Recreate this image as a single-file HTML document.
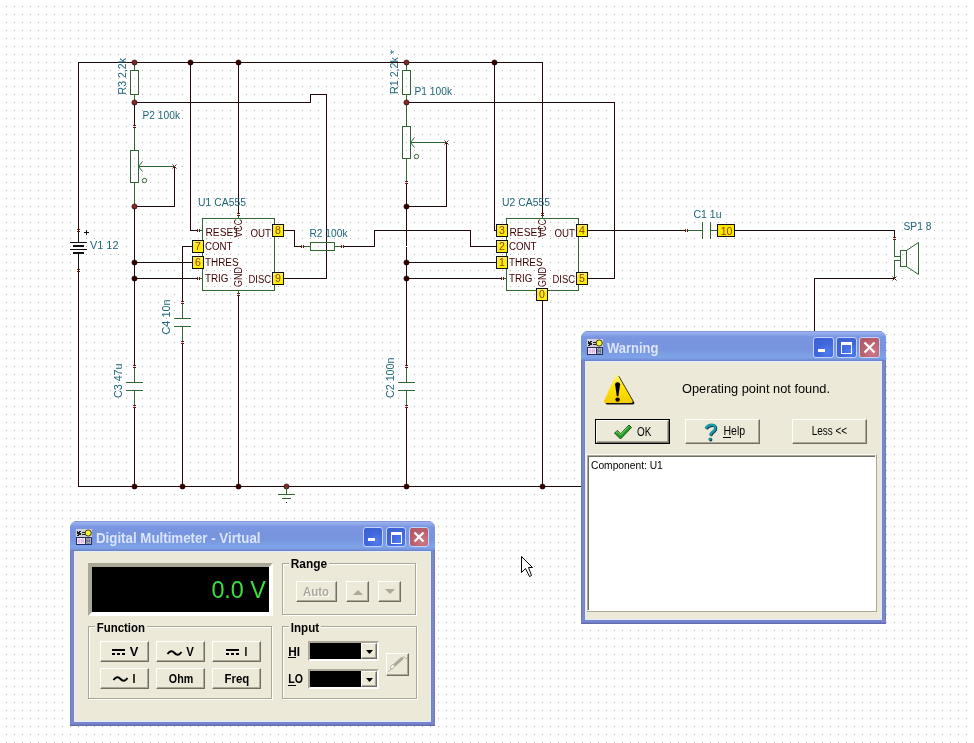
<!DOCTYPE html>
<html><head><meta charset="utf-8"><style>
html,body{margin:0;padding:0;width:974px;height:743px;overflow:hidden;background:#fff}
body{position:relative;font-family:"Liberation Sans",sans-serif}
svg text{font-family:"Liberation Sans",sans-serif} svg rect{shape-rendering:crispEdges} svg{will-change:transform}
.abs{position:absolute}
.btn{position:absolute;box-sizing:border-box;background:#ece9d8;border:1px solid;border-color:#fff #716f64 #716f64 #fff;box-shadow:inset -1px -1px 0 #aca899}
</style></head><body>
<svg class="abs" style="left:0;top:0" width="974" height="743" viewBox="0 0 974 743">
<defs><linearGradient id="pinbg" x1="0" y1="0" x2="0" y2="1"><stop offset="0" stop-color="#fff27a"/><stop offset="0.35" stop-color="#ffe81a"/><stop offset="1" stop-color="#fff000"/></linearGradient><pattern id="dots" x="0" y="0" width="8" height="8" patternUnits="userSpaceOnUse"><rect x="6" y="6" width="1" height="1" fill="#b0b0b0"/></pattern></defs>
<rect width="974" height="743" fill="url(#dots)"/>
<g>
<rect x="78" y="62" width="1" height="169" fill="#200808"/>
<rect x="78" y="62" width="465" height="1" fill="#200808"/>
<rect x="542" y="62" width="1" height="153" fill="#200808"/>
<rect x="78" y="270" width="1" height="217" fill="#200808"/>
<rect x="78" y="486" width="523" height="1" fill="#200808"/>
<rect x="77" y="229" width="3" height="1" fill="#6a1a1a"/>
<rect x="77" y="231" width="3" height="1" fill="#6a1a1a"/>
<rect x="77" y="269" width="3" height="1" fill="#6a1a1a"/>
<rect x="77" y="271" width="3" height="1" fill="#6a1a1a"/>
<rect x="78" y="232" width="1" height="11" fill="#101010"/>
<rect x="70" y="242" width="17" height="1" fill="#101010"/>
<rect x="73" y="245" width="11" height="2" fill="#101010"/>
<rect x="70" y="249" width="17" height="1" fill="#101010"/>
<rect x="73" y="252" width="11" height="2" fill="#101010"/>
<rect x="78" y="254" width="1" height="15" fill="#101010"/>
<rect x="84" y="232" width="5" height="1" fill="#101010"/><rect x="86" y="230" width="1" height="5" fill="#101010"/>
<text x="90" y="249" font-size="11.5" fill="#1d6577" textLength="28.5" lengthAdjust="spacingAndGlyphs">V1 12</text>
<rect x="134" y="62" width="1" height="9" fill="#306630"/>
<rect x="130.5" y="70.5" width="8" height="24" fill="none" stroke="#306630" stroke-width="1"/>
<rect x="134" y="94" width="1" height="9" fill="#306630"/>
<text transform="translate(125.5,94.5) rotate(-90)" font-size="11.5" fill="#1d6577" textLength="36.5" lengthAdjust="spacingAndGlyphs">R3 2,2k</text>
<rect x="134" y="102" width="177" height="1" fill="#200808"/>
<rect x="310" y="94" width="1" height="9" fill="#200808"/>
<rect x="310" y="94" width="17" height="1" fill="#200808"/>
<rect x="326" y="94" width="1" height="185" fill="#200808"/>
<rect x="283" y="278" width="44" height="1" fill="#200808"/>
<rect x="134" y="102" width="1" height="24" fill="#200808"/>
<rect x="133" y="125" width="3" height="1" fill="#6a1a1a"/>
<rect x="133" y="127" width="3" height="1" fill="#6a1a1a"/>
<rect x="134" y="128" width="1" height="23" fill="#306630"/>
<rect x="130.5" y="150.5" width="8" height="32" fill="none" stroke="#306630" stroke-width="1"/>
<polyline points="142.5,161.5 138.5,166.5 142.5,171.5" fill="none" stroke="#306630" stroke-width="1"/>
<rect x="139" y="166" width="35" height="1" fill="#306630"/>
<path d="M172.5 164.5 L176.5 168.5 M176.5 164.5 L172.5 168.5" stroke="#6a1a1a" stroke-width="1"/>
<circle cx="144.5" cy="180.5" r="2.2" fill="none" stroke="#306630" stroke-width="1"/>
<rect x="134" y="182" width="1" height="25" fill="#306630"/>
<rect x="174" y="167" width="1" height="40" fill="#200808"/>
<rect x="134" y="206" width="41" height="1" fill="#200808"/>
<text x="142.5" y="119" font-size="11.5" fill="#1d6577" textLength="37.5" lengthAdjust="spacingAndGlyphs">P2 100k</text>
<rect x="134" y="206" width="1" height="160" fill="#200808"/>
<rect x="133" y="365" width="3" height="1" fill="#6a1a1a"/>
<rect x="133" y="367" width="3" height="1" fill="#6a1a1a"/>
<rect x="134" y="368" width="1" height="15" fill="#306630"/>
<rect x="126" y="382" width="17" height="1" fill="#306630"/>
<rect x="126" y="390" width="17" height="1" fill="#306630"/>
<rect x="134" y="390" width="1" height="16" fill="#306630"/>
<rect x="133" y="405" width="3" height="1" fill="#6a1a1a"/>
<rect x="133" y="407" width="3" height="1" fill="#6a1a1a"/>
<rect x="134" y="408" width="1" height="79" fill="#200808"/>
<text transform="translate(121.5,398) rotate(-90)" font-size="11.5" fill="#1d6577" textLength="34.5" lengthAdjust="spacingAndGlyphs">C3 47u</text>
<rect x="202.5" y="218.5" width="72" height="72" fill="none" stroke="#306630" stroke-width="1"/>
<text x="205.5" y="236" font-size="10" fill="#400000" text-anchor="start" textLength="34" lengthAdjust="spacingAndGlyphs">RESET</text>
<text x="205" y="250" font-size="10" fill="#400000" text-anchor="start" textLength="27.5" lengthAdjust="spacingAndGlyphs">CONT</text>
<text x="205" y="266" font-size="10" fill="#400000" text-anchor="start" textLength="33.5" lengthAdjust="spacingAndGlyphs">THRES</text>
<text x="205" y="282" font-size="10" fill="#400000" text-anchor="start" textLength="23.5" lengthAdjust="spacingAndGlyphs">TRIG</text>
<text x="250.5" y="237" font-size="10" fill="#400000" text-anchor="start" textLength="20.5" lengthAdjust="spacingAndGlyphs">OUT</text>
<text x="248.5" y="283" font-size="10" fill="#400000" text-anchor="start" textLength="22.5" lengthAdjust="spacingAndGlyphs">DISC</text>
<text transform="translate(242,237.5) rotate(-90)" font-size="10" fill="#400000" textLength="18.5" lengthAdjust="spacingAndGlyphs">VCC</text>
<text transform="translate(242,287) rotate(-90)" font-size="10" fill="#400000" textLength="20" lengthAdjust="spacingAndGlyphs">GND</text>
<rect x="190" y="62" width="1" height="169" fill="#200808"/>
<rect x="190" y="230" width="8" height="1" fill="#200808"/>
<rect x="197" y="229" width="1" height="3" fill="#6a1a1a"/>
<rect x="199" y="229" width="1" height="3" fill="#6a1a1a"/>
<rect x="200" y="230" width="3" height="1" fill="#306630"/>
<rect x="238" y="62" width="1" height="152" fill="#200808"/>
<rect x="237" y="213" width="3" height="1" fill="#6a1a1a"/>
<rect x="237" y="215" width="3" height="1" fill="#6a1a1a"/>
<rect x="238" y="216" width="1" height="3" fill="#306630"/>
<rect x="192.5" y="240.5" width="11" height="12" fill="url(#pinbg)" stroke="#101010" stroke-width="1"/>
<text x="198" y="250" font-size="10.5" fill="#8c4400" text-anchor="middle">7</text>
<rect x="182" y="246" width="10" height="1" fill="#200808"/>
<rect x="182" y="246" width="1" height="56" fill="#200808"/>
<rect x="181" y="301" width="3" height="1" fill="#6a1a1a"/>
<rect x="181" y="303" width="3" height="1" fill="#6a1a1a"/>
<rect x="182" y="304" width="1" height="15" fill="#306630"/>
<rect x="174" y="318" width="17" height="1" fill="#306630"/>
<rect x="174" y="326" width="17" height="1" fill="#306630"/>
<rect x="182" y="326" width="1" height="16" fill="#306630"/>
<rect x="181" y="341" width="3" height="1" fill="#6a1a1a"/>
<rect x="181" y="343" width="3" height="1" fill="#6a1a1a"/>
<rect x="182" y="344" width="1" height="143" fill="#200808"/>
<text transform="translate(169.5,334.5) rotate(-90)" font-size="11.5" fill="#1d6577" textLength="35" lengthAdjust="spacingAndGlyphs">C4 10n</text>
<rect x="192.5" y="256.5" width="11" height="12" fill="url(#pinbg)" stroke="#101010" stroke-width="1"/>
<text x="198" y="266" font-size="10.5" fill="#8c4400" text-anchor="middle">6</text>
<rect x="134" y="262" width="58" height="1" fill="#200808"/>
<rect x="134" y="278" width="64" height="1" fill="#200808"/>
<rect x="197" y="277" width="1" height="3" fill="#6a1a1a"/>
<rect x="199" y="277" width="1" height="3" fill="#6a1a1a"/>
<rect x="200" y="278" width="3" height="1" fill="#306630"/>
<rect x="238" y="290" width="1" height="4" fill="#306630"/>
<rect x="237" y="293" width="3" height="1" fill="#6a1a1a"/>
<rect x="237" y="295" width="3" height="1" fill="#6a1a1a"/>
<rect x="238" y="296" width="1" height="191" fill="#200808"/>
<rect x="272.5" y="224.5" width="11" height="12" fill="url(#pinbg)" stroke="#101010" stroke-width="1"/>
<text x="278" y="234" font-size="10.5" fill="#8c4400" text-anchor="middle">8</text>
<rect x="272.5" y="272.5" width="11" height="12" fill="url(#pinbg)" stroke="#101010" stroke-width="1"/>
<text x="278" y="282" font-size="10.5" fill="#8c4400" text-anchor="middle">9</text>
<rect x="283" y="230" width="12" height="1" fill="#200808"/>
<rect x="294" y="230" width="1" height="17" fill="#200808"/>
<rect x="294" y="246" width="8" height="1" fill="#200808"/>
<rect x="301" y="245" width="1" height="3" fill="#6a1a1a"/>
<rect x="303" y="245" width="1" height="3" fill="#6a1a1a"/>
<rect x="304" y="246" width="7" height="1" fill="#306630"/>
<rect x="310.5" y="242.5" width="24" height="8" fill="none" stroke="#306630" stroke-width="1"/>
<rect x="334" y="246" width="8" height="1" fill="#306630"/>
<rect x="341" y="245" width="1" height="3" fill="#6a1a1a"/>
<rect x="343" y="245" width="1" height="3" fill="#6a1a1a"/>
<rect x="344" y="246" width="31" height="1" fill="#200808"/>
<rect x="374" y="230" width="1" height="17" fill="#200808"/>
<rect x="374" y="230" width="97" height="1" fill="#200808"/>
<rect x="470" y="230" width="1" height="17" fill="#200808"/>
<rect x="470" y="246" width="26" height="1" fill="#200808"/>
<text x="198" y="206" font-size="11.5" fill="#1d6577" textLength="48" lengthAdjust="spacingAndGlyphs">U1 CA555</text>
<text x="309.5" y="237" font-size="11.5" fill="#1d6577" textLength="38" lengthAdjust="spacingAndGlyphs">R2 100k</text>
<rect x="406" y="62" width="1" height="9" fill="#306630"/>
<rect x="402.5" y="70.5" width="8" height="24" fill="none" stroke="#306630" stroke-width="1"/>
<rect x="406" y="94" width="1" height="9" fill="#306630"/>
<text transform="translate(397.5,94) rotate(-90)" font-size="11.5" fill="#1d6577" textLength="44" lengthAdjust="spacingAndGlyphs">R1 2,2k *</text>
<rect x="406" y="102" width="209" height="1" fill="#200808"/>
<rect x="614" y="102" width="1" height="177" fill="#200808"/>
<rect x="587" y="278" width="28" height="1" fill="#200808"/>
<rect x="406" y="102" width="1" height="25" fill="#306630"/>
<rect x="402.5" y="126.5" width="8" height="32" fill="none" stroke="#306630" stroke-width="1"/>
<polyline points="414.5,137.5 410.5,142.5 414.5,147.5" fill="none" stroke="#306630" stroke-width="1"/>
<rect x="411" y="142" width="35" height="1" fill="#306630"/>
<path d="M444.5 140.5 L448.5 144.5 M448.5 140.5 L444.5 144.5" stroke="#6a1a1a" stroke-width="1"/>
<circle cx="416.5" cy="156.5" r="2.2" fill="none" stroke="#306630" stroke-width="1"/>
<rect x="406" y="158" width="1" height="24" fill="#306630"/>
<rect x="405" y="181" width="3" height="1" fill="#6a1a1a"/>
<rect x="405" y="183" width="3" height="1" fill="#6a1a1a"/>
<rect x="446" y="143" width="1" height="64" fill="#200808"/>
<rect x="406" y="206" width="41" height="1" fill="#200808"/>
<text x="414.5" y="95" font-size="11.5" fill="#1d6577" textLength="37.5" lengthAdjust="spacingAndGlyphs">P1 100k</text>
<rect x="406" y="184" width="1" height="182" fill="#200808"/>
<rect x="405" y="365" width="3" height="1" fill="#6a1a1a"/>
<rect x="405" y="367" width="3" height="1" fill="#6a1a1a"/>
<rect x="406" y="368" width="1" height="15" fill="#306630"/>
<rect x="398" y="382" width="17" height="1" fill="#306630"/>
<rect x="398" y="390" width="17" height="1" fill="#306630"/>
<rect x="406" y="390" width="1" height="16" fill="#306630"/>
<rect x="405" y="405" width="3" height="1" fill="#6a1a1a"/>
<rect x="405" y="407" width="3" height="1" fill="#6a1a1a"/>
<rect x="406" y="408" width="1" height="79" fill="#200808"/>
<text transform="translate(393.5,398) rotate(-90)" font-size="11.5" fill="#1d6577" textLength="40.5" lengthAdjust="spacingAndGlyphs">C2 100n</text>
<rect x="506.5" y="218.5" width="72" height="72" fill="none" stroke="#306630" stroke-width="1"/>
<text x="509.5" y="236" font-size="10" fill="#400000" text-anchor="start" textLength="34" lengthAdjust="spacingAndGlyphs">RESET</text>
<text x="509" y="250" font-size="10" fill="#400000" text-anchor="start" textLength="27.5" lengthAdjust="spacingAndGlyphs">CONT</text>
<text x="509" y="266" font-size="10" fill="#400000" text-anchor="start" textLength="33.5" lengthAdjust="spacingAndGlyphs">THRES</text>
<text x="509" y="282" font-size="10" fill="#400000" text-anchor="start" textLength="23.5" lengthAdjust="spacingAndGlyphs">TRIG</text>
<text x="554.5" y="237" font-size="10" fill="#400000" text-anchor="start" textLength="20.5" lengthAdjust="spacingAndGlyphs">OUT</text>
<text x="552.5" y="283" font-size="10" fill="#400000" text-anchor="start" textLength="22.5" lengthAdjust="spacingAndGlyphs">DISC</text>
<text transform="translate(546,237.5) rotate(-90)" font-size="10" fill="#400000" textLength="18.5" lengthAdjust="spacingAndGlyphs">VCC</text>
<text transform="translate(546,287) rotate(-90)" font-size="10" fill="#400000" textLength="20" lengthAdjust="spacingAndGlyphs">GND</text>
<rect x="494" y="62" width="1" height="169" fill="#200808"/>
<rect x="494" y="230" width="3" height="1" fill="#200808"/>
<rect x="496.5" y="224.5" width="11" height="12" fill="url(#pinbg)" stroke="#101010" stroke-width="1"/>
<text x="502" y="234" font-size="10.5" fill="#8c4400" text-anchor="middle">3</text>
<rect x="496.5" y="240.5" width="11" height="12" fill="url(#pinbg)" stroke="#101010" stroke-width="1"/>
<text x="502" y="250" font-size="10.5" fill="#8c4400" text-anchor="middle">2</text>
<rect x="496.5" y="256.5" width="11" height="12" fill="url(#pinbg)" stroke="#101010" stroke-width="1"/>
<text x="502" y="266" font-size="10.5" fill="#8c4400" text-anchor="middle">1</text>
<rect x="406" y="262" width="90" height="1" fill="#200808"/>
<rect x="406" y="278" width="96" height="1" fill="#200808"/>
<rect x="501" y="277" width="1" height="3" fill="#6a1a1a"/>
<rect x="503" y="277" width="1" height="3" fill="#6a1a1a"/>
<rect x="504" y="278" width="3" height="1" fill="#306630"/>
<rect x="542" y="216" width="1" height="3" fill="#306630"/>
<rect x="541" y="213" width="3" height="1" fill="#6a1a1a"/>
<rect x="541" y="215" width="3" height="1" fill="#6a1a1a"/>
<rect x="576.5" y="224.5" width="11" height="12" fill="url(#pinbg)" stroke="#101010" stroke-width="1"/>
<text x="582" y="234" font-size="10.5" fill="#8c4400" text-anchor="middle">4</text>
<rect x="576.5" y="272.5" width="11" height="12" fill="url(#pinbg)" stroke="#101010" stroke-width="1"/>
<text x="582" y="282" font-size="10.5" fill="#8c4400" text-anchor="middle">5</text>
<rect x="536.5" y="288.5" width="11" height="12" fill="url(#pinbg)" stroke="#101010" stroke-width="1"/>
<text x="542" y="298" font-size="10.5" fill="#8c4400" text-anchor="middle">0</text>
<rect x="542" y="301" width="1" height="186" fill="#200808"/>
<text x="502" y="206" font-size="11.5" fill="#1d6577" textLength="48" lengthAdjust="spacingAndGlyphs">U2 CA555</text>
<rect x="587" y="230" width="99" height="1" fill="#200808"/>
<rect x="685" y="229" width="1" height="3" fill="#6a1a1a"/>
<rect x="687" y="229" width="1" height="3" fill="#6a1a1a"/>
<rect x="688" y="230" width="15" height="1" fill="#306630"/>
<rect x="702" y="222" width="1" height="17" fill="#306630"/>
<rect x="710" y="222" width="1" height="17" fill="#306630"/>
<rect x="710" y="230" width="8" height="1" fill="#306630"/>
<rect x="717.5" y="224.5" width="17" height="12" fill="#fde600" stroke="#101010" stroke-width="1"/>
<text x="726.5" y="234.5" font-size="10.5" fill="#8c4400" text-anchor="middle">10</text>
<rect x="735" y="230" width="160" height="1" fill="#200808"/>
<rect x="894" y="230" width="1" height="8" fill="#200808"/>
<rect x="893" y="237" width="3" height="1" fill="#6a1a1a"/>
<rect x="893" y="239" width="3" height="1" fill="#6a1a1a"/>
<rect x="894" y="240" width="1" height="17" fill="#306630"/>
<rect x="894" y="256" width="7" height="1" fill="#306630"/>
<rect x="894" y="260" width="1" height="18" fill="#306630"/>
<rect x="894" y="260" width="7" height="1" fill="#306630"/>
<rect x="900.5" y="250.5" width="6" height="16" fill="none" stroke="#306630" stroke-width="1"/>
<polyline points="906.5,250.5 918.5,242.5 918.5,274.5 906.5,266.5" fill="none" stroke="#306630" stroke-width="1"/>
<path d="M892.5 276.5 L896.5 280.5 M896.5 276.5 L892.5 280.5" stroke="#6a1a1a" stroke-width="1"/>
<rect x="814" y="278" width="80" height="1" fill="#200808"/>
<rect x="814" y="278" width="1" height="58" fill="#200808"/>
<text x="693.5" y="217.5" font-size="11.5" fill="#1d6577" textLength="28" lengthAdjust="spacingAndGlyphs">C1 1u</text>
<text x="903.5" y="230" font-size="11.5" fill="#1d6577" textLength="28" lengthAdjust="spacingAndGlyphs">SP1 8</text>
<circle cx="134.5" cy="486.5" r="2.6" fill="#3a0000" stroke="#1a0000" stroke-width="0.6"/>
<circle cx="182.5" cy="486.5" r="2.6" fill="#3a0000" stroke="#1a0000" stroke-width="0.6"/>
<circle cx="238.5" cy="486.5" r="2.6" fill="#3a0000" stroke="#1a0000" stroke-width="0.6"/>
<circle cx="406.5" cy="486.5" r="2.6" fill="#3a0000" stroke="#1a0000" stroke-width="0.6"/>
<circle cx="542.5" cy="486.5" r="2.6" fill="#3a0000" stroke="#1a0000" stroke-width="0.6"/>
<circle cx="286.5" cy="486.5" r="2.6" fill="#842828" stroke="#1a0000" stroke-width="0.6"/>
<rect x="286" y="487" width="1" height="8" fill="#306630"/>
<rect x="278" y="494" width="17" height="1" fill="#306630"/>
<rect x="282" y="498" width="9" height="1" fill="#306630"/>
<rect x="286" y="502" width="1" height="1" fill="#101010"/>
<circle cx="190.5" cy="62.5" r="2.6" fill="#3a0000" stroke="#1a0000" stroke-width="0.6"/>
<circle cx="238.5" cy="62.5" r="2.6" fill="#3a0000" stroke="#1a0000" stroke-width="0.6"/>
<circle cx="494.5" cy="62.5" r="2.6" fill="#3a0000" stroke="#1a0000" stroke-width="0.6"/>
<circle cx="134.5" cy="262.5" r="2.6" fill="#3a0000" stroke="#1a0000" stroke-width="0.6"/>
<circle cx="134.5" cy="278.5" r="2.6" fill="#3a0000" stroke="#1a0000" stroke-width="0.6"/>
<circle cx="406.5" cy="206.5" r="2.6" fill="#3a0000" stroke="#1a0000" stroke-width="0.6"/>
<circle cx="406.5" cy="262.5" r="2.6" fill="#3a0000" stroke="#1a0000" stroke-width="0.6"/>
<circle cx="406.5" cy="278.5" r="2.6" fill="#3a0000" stroke="#1a0000" stroke-width="0.6"/>
<circle cx="134.5" cy="62.5" r="2.6" fill="#842828" stroke="#1a0000" stroke-width="0.6"/>
<circle cx="134.5" cy="102.5" r="2.6" fill="#842828" stroke="#1a0000" stroke-width="0.6"/>
<circle cx="406.5" cy="62.5" r="2.6" fill="#842828" stroke="#1a0000" stroke-width="0.6"/>
<circle cx="406.5" cy="102.5" r="2.6" fill="#842828" stroke="#1a0000" stroke-width="0.6"/>
<circle cx="134.5" cy="206.5" r="2.6" fill="#842828" stroke="#1a0000" stroke-width="0.6"/>
<rect x="406" y="246" width="1" height="1" fill="#fff"/>
</g>
</svg>
<div style="position:absolute;left:581px;top:331px;width:305px;height:293px;border-radius:7px 7px 0 0;overflow:hidden;background:linear-gradient(90deg,#6068a8 0,#7a88cc 1px,#7c88c8 3px,#7080bc 4px,#7080bc 301px,#7c88c8 302px,#7a88cc 304px,#6068a8 305px)">
<div style="position:absolute;left:0;top:0;width:305px;height:30px;background:linear-gradient(180deg,#6a7cc0 0px,#9cb2ee 1px,#8ea8ea 3px,#7b96e0 6px,#7794de 18px,#7ea4e8 26px,#7a9ae0 28px,#6a7cc4 30px)"></div>
<div style="position:absolute;left:0;top:289px;width:305px;height:4px;background:linear-gradient(180deg,#7484d0,#7a86cc 2px,#5a62a0 4px)"></div>
<div style="position:absolute;left:4px;top:30px;width:297px;height:259px;background:#ece9d8;box-shadow:inset 1px 1px 0 #e4ecff, inset -1px -1px 0 #e4ecff"></div>
</div><svg style="position:absolute;left:587px;top:339px" width="16" height="16" viewBox="0 0 16 16">
<rect x="0" y="0" width="16" height="8" fill="#cfd0d8"/>
<path d="M1 2h1v1h1v-1h2v1h-1v1h1v2h-2v1h-2v-1h1v-1h-1z" fill="#1a1a1a"/>
<rect x="6" y="3" width="3" height="1" fill="#202020"/><rect x="6" y="5" width="3" height="1" fill="#202020"/>
<circle cx="12.2" cy="4" r="3.1" fill="#f4f43a" stroke="#3a3a10" stroke-width="1"/>
<rect x="0" y="8" width="16" height="8" fill="#252b6a"/>
<rect x="1" y="9" width="8" height="6" fill="#fbf8ff"/>
<path d="M2 10h2v2h-2zM2 12h2v2h-2zM5.5 10h2v2h-2zM5.5 12h2v2h-2z" fill="none" stroke="#d098d8" stroke-width="0.6"/>
<rect x="10" y="9" width="5" height="6" fill="#c4cad8"/>
<path d="M10.8 9.8h3v2.2h-3zM10.8 12h3v2.3h-3z" fill="none" stroke="#5a6078" stroke-width="0.8"/>
</svg><div style="position:absolute;left:813px;top:337px;width:19px;height:19px;border:1px solid #c4d2fa;border-radius:3px;background:radial-gradient(circle at 70% 75%, #4f7ef0 0%, #4168dc 45%, #3a5fd0 100%);box-sizing:content-box"><div style="position:absolute;left:4px;top:11px;width:7px;height:3px;background:#fff"></div></div><div style="position:absolute;left:836px;top:337px;width:19px;height:19px;border:1px solid #c4d2fa;border-radius:3px;background:radial-gradient(circle at 70% 75%, #4f7ef0 0%, #4168dc 45%, #3a5fd0 100%);box-sizing:content-box"><div style="position:absolute;left:4px;top:4px;width:9px;height:8px;border:1px solid #fff;border-top-width:3px"></div></div><div style="position:absolute;left:859px;top:337px;width:19px;height:19px;border:1px solid #c4d2fa;border-radius:3px;background:radial-gradient(circle at 70% 75%, #d07a86 0%, #b95f6e 55%, #ac5564 100%);box-sizing:content-box"><svg style="position:absolute;left:0;top:0" width="19" height="19"><path d="M4.5 4.5 L14.5 14.5 M14.5 4.5 L4.5 14.5" stroke="#fff" stroke-width="2.2"/></svg></div><svg class="abs" style="left:600px;top:372px" width="36" height="36" viewBox="0 0 36 36">
<defs><linearGradient id="wy" x1="0" y1="0" x2="0" y2="1"><stop offset="0" stop-color="#fff480"/><stop offset="0.45" stop-color="#ffe600"/><stop offset="1" stop-color="#f2cc00"/></linearGradient></defs>
<path d="M15.6 3.6 Q16.8 1.6 18 3.6 L32.4 28.6 Q33.4 31 30.8 31 L5.8 31 Q3.2 31 4.2 28.6 Z" fill="#141414" transform="translate(1.7,1.5)"/>
<path d="M15.6 3.6 Q16.8 1.6 18 3.6 L32.4 28.6 Q33.4 31 30.8 31 L5.8 31 Q3.2 31 4.2 28.6 Z" fill="url(#wy)"/>
<path d="M15.1 12.2 Q15.1 10.3 17.6 10.3 Q20.1 10.3 20.1 12.2 L18.4 24.2 L16.8 24.2 Z" fill="#000"/>
<circle cx="17.6" cy="27.6" r="2.2" fill="#000"/>
</svg><div class="abs" style="left:595px;top:419px;width:75px;height:25px;box-sizing:border-box;border:1px solid #000;background:#ece9d8"></div><div class="btn" style="left:596px;top:420px;width:73px;height:23px"></div><svg class="abs" style="left:613px;top:423px" width="20" height="18" viewBox="0 0 20 18"><path d="M1.5 10 L4.5 7.5 L7.5 11 L16 2 L18.5 4.5 L7.5 16 Z" fill="#2a9a2a" stroke="#0c5a0c" stroke-width="1"/><path d="M3 9.6 L4.5 8.6 L7.5 12 L16 3.2" fill="none" stroke="#7ada6a" stroke-width="1"/></svg><div class="btn" style="left:685px;top:419px;width:75px;height:25px"></div><svg class="abs" style="left:703px;top:422px" width="16" height="20" viewBox="0 0 16 20"><g transform="translate(0.7,0.7)"><path d="M2.6 6.4 Q5 2.6 9 2.8 Q13 3.2 12 7 Q11 9 8.4 10.8 L7 13.2" fill="none" stroke="#0a3848" stroke-width="2.8"/><circle cx="7" cy="17" r="1.7" fill="#0a3848"/></g><path d="M2.6 6.4 Q5 2.6 9 2.8 Q13 3.2 12 7 Q11 9 8.4 10.8 L7 13.2" fill="none" stroke="#1c98a8" stroke-width="2.6"/><circle cx="7" cy="17" r="1.6" fill="#1c8898"/></svg><div class="btn" style="left:792px;top:419px;width:75px;height:25px"></div><div class="abs" style="left:586px;top:454px;width:291px;height:158px;box-sizing:border-box;background:#fff;border:1px solid;border-color:#fbfbf6 #aca899 #aca899 #fbfbf6"></div><div class="abs" style="left:587px;top:455px;width:289px;height:156px;box-sizing:border-box;background:#fff;border:1px solid;border-color:#aca899 #fff #fff #aca899;box-shadow:inset 1px 1px 0 #716f64"></div><div style="position:absolute;left:70px;top:521px;width:365px;height:205px;border-radius:7px 7px 0 0;overflow:hidden;background:linear-gradient(90deg,#6068a8 0,#7a88cc 1px,#7c88c8 3px,#7080bc 4px,#7080bc 361px,#7c88c8 362px,#7a88cc 364px,#6068a8 365px)">
<div style="position:absolute;left:0;top:0;width:365px;height:30px;background:linear-gradient(180deg,#6a7cc0 0px,#9cb2ee 1px,#8ea8ea 3px,#7b96e0 6px,#7794de 18px,#7ea4e8 26px,#7a9ae0 28px,#6a7cc4 30px)"></div>
<div style="position:absolute;left:0;top:201px;width:365px;height:4px;background:linear-gradient(180deg,#7484d0,#7a86cc 2px,#5a62a0 4px)"></div>
<div style="position:absolute;left:4px;top:30px;width:357px;height:171px;background:#ece9d8;box-shadow:inset 1px 1px 0 #e4ecff, inset -1px -1px 0 #e4ecff"></div>
</div><svg style="position:absolute;left:76px;top:529px" width="16" height="16" viewBox="0 0 16 16">
<rect x="0" y="0" width="16" height="8" fill="#cfd0d8"/>
<path d="M1 2h1v1h1v-1h2v1h-1v1h1v2h-2v1h-2v-1h1v-1h-1z" fill="#1a1a1a"/>
<rect x="6" y="3" width="3" height="1" fill="#202020"/><rect x="6" y="5" width="3" height="1" fill="#202020"/>
<circle cx="12.2" cy="4" r="3.1" fill="#f4f43a" stroke="#3a3a10" stroke-width="1"/>
<rect x="0" y="8" width="16" height="8" fill="#252b6a"/>
<rect x="1" y="9" width="8" height="6" fill="#fbf8ff"/>
<path d="M2 10h2v2h-2zM2 12h2v2h-2zM5.5 10h2v2h-2zM5.5 12h2v2h-2z" fill="none" stroke="#d098d8" stroke-width="0.6"/>
<rect x="10" y="9" width="5" height="6" fill="#c4cad8"/>
<path d="M10.8 9.8h3v2.2h-3zM10.8 12h3v2.3h-3z" fill="none" stroke="#5a6078" stroke-width="0.8"/>
</svg><div style="position:absolute;left:363px;top:527px;width:18px;height:18px;border:1px solid #c4d2fa;border-radius:3px;background:radial-gradient(circle at 70% 75%, #4f7ef0 0%, #4168dc 45%, #3a5fd0 100%);box-sizing:content-box"><div style="position:absolute;left:4px;top:10px;width:7px;height:3px;background:#fff"></div></div><div style="position:absolute;left:386px;top:527px;width:18px;height:18px;border:1px solid #c4d2fa;border-radius:3px;background:radial-gradient(circle at 70% 75%, #4f7ef0 0%, #4168dc 45%, #3a5fd0 100%);box-sizing:content-box"><div style="position:absolute;left:4px;top:4px;width:9px;height:8px;border:1px solid #fff;border-top-width:3px"></div></div><div style="position:absolute;left:409px;top:527px;width:18px;height:18px;border:1px solid #c4d2fa;border-radius:3px;background:radial-gradient(circle at 70% 75%, #d07a86 0%, #b95f6e 55%, #ac5564 100%);box-sizing:content-box"><svg style="position:absolute;left:0;top:0" width="18" height="18"><path d="M4.5 4.5 L13.5 13.5 M13.5 4.5 L4.5 13.5" stroke="#fff" stroke-width="2.2"/></svg></div><div class="abs" style="left:88px;top:563px;width:185px;height:53px;box-sizing:border-box;background:#000;border:4px solid;border-color:#aca899 #fff #fff #aca899"></div><div class="abs" style="left:283px;top:564px;width:134px;height:52px;box-sizing:border-box;border:1px solid #fff"></div><div class="abs" style="left:282px;top:563px;width:134px;height:52px;box-sizing:border-box;border:1px solid #aca899"></div><div class="abs" style="left:288.8px;top:560px;width:40.3px;height:6px;background:#ece9d8"></div><div class="btn" style="left:296px;top:581px;width:41px;height:21px"></div><div class="btn" style="left:346px;top:581px;width:23px;height:21px"><div style="position:absolute;left:6px;top:8px;width:0;height:0;border-left:5px solid transparent;border-right:5px solid transparent;border-bottom:5px solid #aca899"></div></div><div class="btn" style="left:378px;top:581px;width:23px;height:21px"><div style="position:absolute;left:6px;top:7px;width:0;height:0;border-left:5px solid transparent;border-right:5px solid transparent;border-top:5px solid #aca899"></div></div><div class="abs" style="left:89px;top:627px;width:184px;height:73px;box-sizing:border-box;border:1px solid #fff"></div><div class="abs" style="left:88px;top:626px;width:184px;height:73px;box-sizing:border-box;border:1px solid #aca899"></div><div class="abs" style="left:94.7px;top:623px;width:52.3px;height:6px;background:#ece9d8"></div><div class="btn" style="left:100px;top:641px;width:49px;height:21px"></div><div class="btn" style="left:100px;top:668px;width:49px;height:21px"></div><div class="btn" style="left:156px;top:641px;width:49px;height:21px"></div><div class="btn" style="left:156px;top:668px;width:49px;height:21px"></div><div class="btn" style="left:212px;top:641px;width:49px;height:21px"></div><div class="btn" style="left:212px;top:668px;width:49px;height:21px"></div><div class="abs" style="left:283px;top:627px;width:135px;height:73px;box-sizing:border-box;border:1px solid #fff"></div><div class="abs" style="left:282px;top:626px;width:135px;height:73px;box-sizing:border-box;border:1px solid #aca899"></div><div class="abs" style="left:288.8px;top:623px;width:32.3px;height:6px;background:#ece9d8"></div><div class="abs" style="left:308px;top:641px;width:71px;height:20px;box-sizing:border-box;background:#000;border:2px solid;border-color:#aca899 #fff #fff #aca899"></div><div class="btn" style="left:361px;top:643px;width:16px;height:16px"></div><div class="abs" style="left:308px;top:669px;width:71px;height:20px;box-sizing:border-box;background:#000;border:2px solid;border-color:#aca899 #fff #fff #aca899"></div><div class="btn" style="left:361px;top:671px;width:16px;height:16px"></div><div class="btn" style="left:386px;top:653px;width:23px;height:23px"><svg style="position:absolute;left:0;top:0" width="21" height="21"><path d="M1.2 17.8 L4.8 14.6" stroke="#aca899" stroke-width="1"/><path d="M8.3 10.4 L14.8 4.6" stroke="#aca899" stroke-width="3.2" stroke-linecap="round"/><ellipse cx="6" cy="12.6" rx="2.4" ry="1.6" transform="rotate(-45 5.9 13.2)" fill="#fff" stroke="#aca899" stroke-width="0.9"/><path d="M15 4.4 L16.5 2.4 L18.4 4.4 L20.2 4.4" fill="none" stroke="#aca899" stroke-width="0.9"/></svg></div><svg class="abs" style="left:0;top:0" width="974" height="743" viewBox="0 0 974 743"><text x="607" y="352.7" font-size="14" font-weight="bold" fill="#dbe5fa" text-anchor="start" textLength="51.5" lengthAdjust="spacingAndGlyphs" >Warning</text>
<text x="682" y="392.8" font-size="12.5" font-weight="normal" fill="#000" text-anchor="start" textLength="148" lengthAdjust="spacingAndGlyphs" >Operating point not found.</text>
<text x="637" y="436" font-size="12" font-weight="normal" fill="#000" text-anchor="start" textLength="14.3" lengthAdjust="spacingAndGlyphs" >OK</text>
<text x="723.5" y="435.2" font-size="12" font-weight="normal" fill="#000" text-anchor="start" textLength="21.7" lengthAdjust="spacingAndGlyphs" >Help</text>
<rect x="723" y="437" width="8" height="1" fill="#000"/>
<text x="811.7" y="435" font-size="12" font-weight="normal" fill="#000" text-anchor="start" textLength="35.3" lengthAdjust="spacingAndGlyphs" >Less &lt;&lt;</text>
<text x="591" y="469" font-size="11.8" font-weight="normal" fill="#000" text-anchor="start" textLength="71.8" lengthAdjust="spacingAndGlyphs" >Component: U1</text>
<text x="96" y="543" font-size="14" font-weight="bold" fill="#dbe5fa" text-anchor="start" textLength="164.5" lengthAdjust="spacingAndGlyphs" >Digital Multimeter - Virtual</text>
<text x="211.4" y="598" font-size="23" font-weight="normal" fill="#3ee03e" text-anchor="start" textLength="54.5" lengthAdjust="spacingAndGlyphs" >0.0 V</text>
<text x="290.8" y="568" font-size="12" font-weight="bold" fill="#000" text-anchor="start" textLength="36.3" lengthAdjust="spacingAndGlyphs" >Range</text>
<text x="304" y="597" font-size="12" font-weight="bold" fill="#fff" text-anchor="start" textLength="26" lengthAdjust="spacingAndGlyphs" >Auto</text>
<text x="303" y="596" font-size="12" font-weight="bold" fill="#aca899" text-anchor="start" textLength="26" lengthAdjust="spacingAndGlyphs" >Auto</text>
<text x="96.7" y="632" font-size="12" font-weight="bold" fill="#000" text-anchor="start" textLength="48.3" lengthAdjust="spacingAndGlyphs" >Function</text>
<rect x="112" y="649" width="13" height="2" fill="#000"/><rect x="112" y="653" width="3" height="2" fill="#000"/><rect x="117" y="653" width="3" height="2" fill="#000"/><rect x="122" y="653" width="3" height="2" fill="#000"/>
<text x="129.8" y="655.8" font-size="12" font-weight="bold" fill="#000" text-anchor="start" textLength="8.6" lengthAdjust="spacingAndGlyphs" >V</text>
<path d="M167.5 654 Q171.0 649 174.5 653 Q178.0 657 181.5 652" fill="none" stroke="#000" stroke-width="2"/>
<text x="186.2" y="655.8" font-size="12" font-weight="bold" fill="#000" text-anchor="start" textLength="7.6" lengthAdjust="spacingAndGlyphs" >V</text>
<rect x="226" y="649" width="13" height="2" fill="#000"/><rect x="226" y="653" width="3" height="2" fill="#000"/><rect x="231" y="653" width="3" height="2" fill="#000"/><rect x="236" y="653" width="3" height="2" fill="#000"/>
<text x="244.6" y="655.8" font-size="12" font-weight="bold" fill="#000" text-anchor="start" textLength="2.8" lengthAdjust="spacingAndGlyphs" >I</text>
<path d="M113.5 680 Q117.0 675 120.5 679 Q124.0 683 127.5 678" fill="none" stroke="#000" stroke-width="2"/>
<text x="132.4" y="682.8" font-size="12" font-weight="bold" fill="#000" text-anchor="start" textLength="3" lengthAdjust="spacingAndGlyphs" >I</text>
<text x="168.8" y="682.8" font-size="12" font-weight="bold" fill="#000" text-anchor="start" textLength="24.4" lengthAdjust="spacingAndGlyphs" >Ohm</text>
<text x="224.6" y="682.8" font-size="12" font-weight="bold" fill="#000" text-anchor="start" textLength="24.7" lengthAdjust="spacingAndGlyphs" >Freq</text>
<text x="290.8" y="632" font-size="12" font-weight="bold" fill="#000" text-anchor="start" textLength="28.3" lengthAdjust="spacingAndGlyphs" >Input</text>
<text x="288.3" y="656.1" font-size="12" font-weight="bold" fill="#000" text-anchor="start" textLength="11.8" lengthAdjust="spacingAndGlyphs" >HI</text>
<rect x="288" y="657" width="8" height="1" fill="#000"/>
<text x="288.3" y="683.4" font-size="12" font-weight="bold" fill="#000" text-anchor="start" textLength="14.7" lengthAdjust="spacingAndGlyphs" >LO</text>
<rect x="288" y="685" width="8" height="1" fill="#000"/>
<path d="M366 650 L373 650 L369.5 654 Z" fill="#000"/>
<path d="M366 678 L373 678 L369.5 682 Z" fill="#000"/></svg><svg class="abs" style="left:520px;top:555px" width="16" height="24" viewBox="0 0 16 24"><path d="M1.5 1.5 L1.5 17.5 L5.5 13.5 L9.5 21.5 L11.5 20.5 L8.5 12.5 L12.5 12.5 Z" fill="#fff" stroke="#000" stroke-width="1" stroke-linejoin="miter"/></svg></body></html>
